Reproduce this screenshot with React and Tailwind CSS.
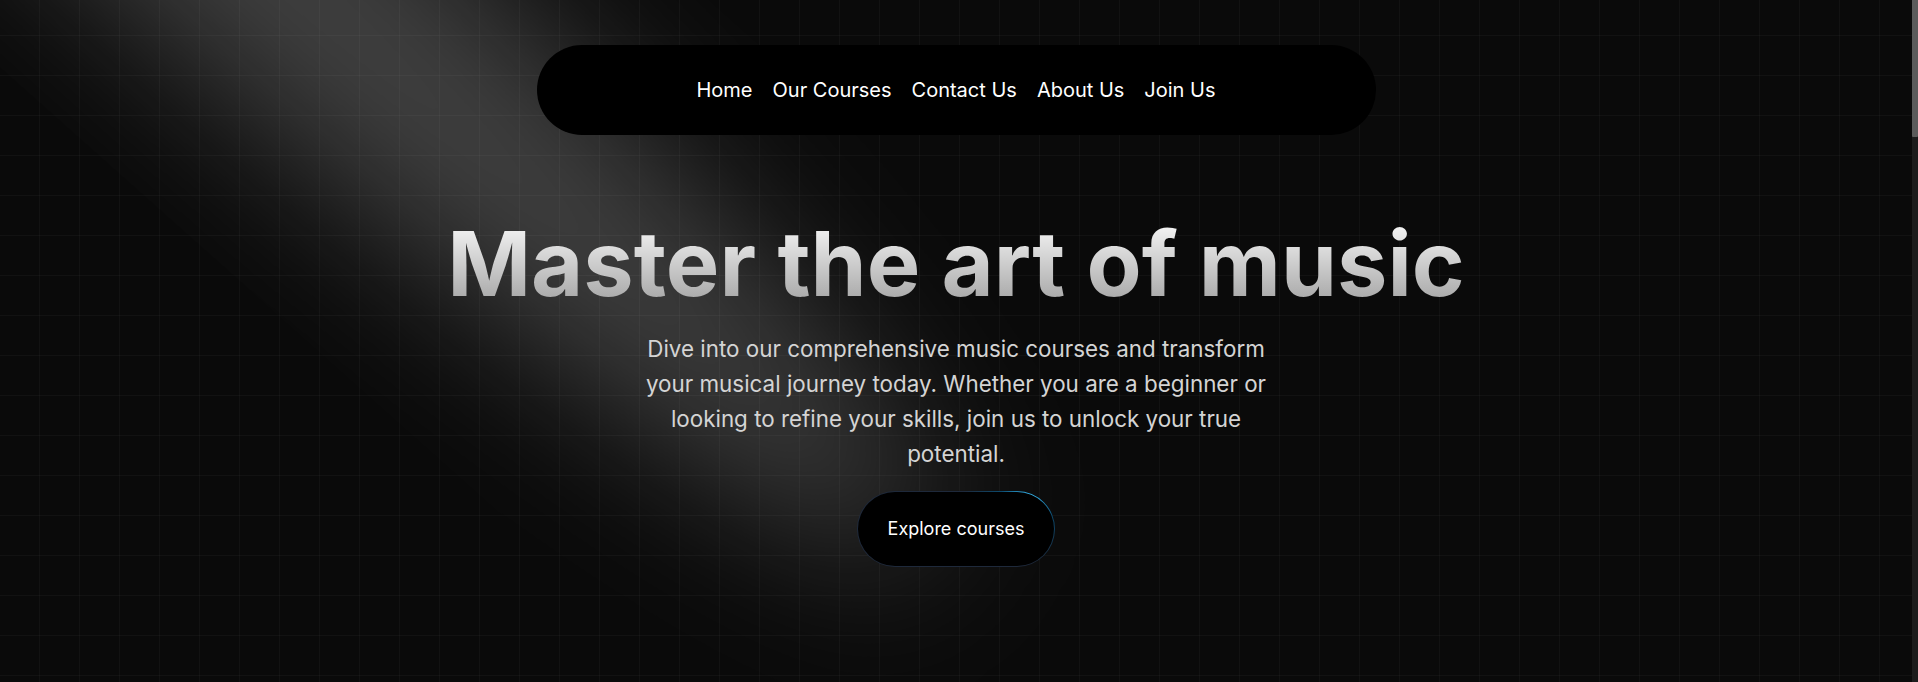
import React from 'react';

const links = ['Home', 'Our Courses', 'Contact Us', 'About Us', 'Join Us'];

// soft diagonal light beam coming from the top-left corner
const Spotlight = () => (
  <svg
    className="pointer-events-none absolute inset-0 z-0 h-full w-full"
    viewBox="0 0 1912 682"
    preserveAspectRatio="none"
    fill="none"
  >
    <defs>
      <filter id="spot-blur" x="-50%" y="-50%" width="200%" height="200%" colorInterpolationFilters="sRGB">
        <feGaussianBlur stdDeviation="75" />
      </filter>
    </defs>
    <ellipse
      cx="232"
      cy="-75"
      rx="940"
      ry="130"
      transform="rotate(41.7 232 -75)"
      fill="white"
      fillOpacity="0.22"
      filter="url(#spot-blur)"
    />
  </svg>
);

export default function App() {
  return (
    <div className="flex h-[682px] w-full overflow-hidden bg-[#0a0a0a] font-['Inter',sans-serif] antialiased">
      {/* Hero */}
      <main className="relative flex-1 overflow-hidden bg-[linear-gradient(to_right,rgba(255,255,255,0.03)_1px,transparent_1px),linear-gradient(to_bottom,rgba(255,255,255,0.03)_1px,transparent_1px)] bg-[size:40px_40px] bg-[position:39px_35px]">
        <Spotlight />

        <div className="relative z-10 flex flex-col items-center pt-[45px]">
          {/* Nav */}
          <nav className="flex h-[90px] w-[839px] items-center justify-center gap-5 rounded-full bg-black">
            {links.map((l) => (
              <a key={l} href="#" className="text-xl text-white">
                {l}
              </a>
            ))}
          </nav>

          <h1 className="mt-[84px] bg-gradient-to-b from-neutral-50 to-neutral-400 bg-clip-text text-[90px] font-bold leading-none text-transparent">
            Master the art of music
          </h1>

          <p className="mt-[22px] max-w-[640px] text-center text-[22.4px] leading-[35px] text-neutral-300">
            Dive into our comprehensive music courses and transform your musical journey today. Whether you are a beginner or looking to refine your skills, join us to unlock your true potential.
          </p>

          <div className="mt-[20px] rounded-full bg-[radial-gradient(circle_at_88%_6%,#38bdf8_0%,#0c4a6e_16%,#1e293b_36%,#1e293b_100%)] p-px">
            <button className="flex h-[74px] w-[196px] items-center justify-center rounded-full bg-black text-lg text-white">
              Explore courses
            </button>
          </div>
        </div>
      </main>

      {/* Scrollbar */}
      <aside className="flex w-[6px] flex-col bg-[#1c1c1c]">
        <div className="h-[137px] rounded-b-[1px] bg-[#5b5b5b]" />
      </aside>
    </div>
  );
}
